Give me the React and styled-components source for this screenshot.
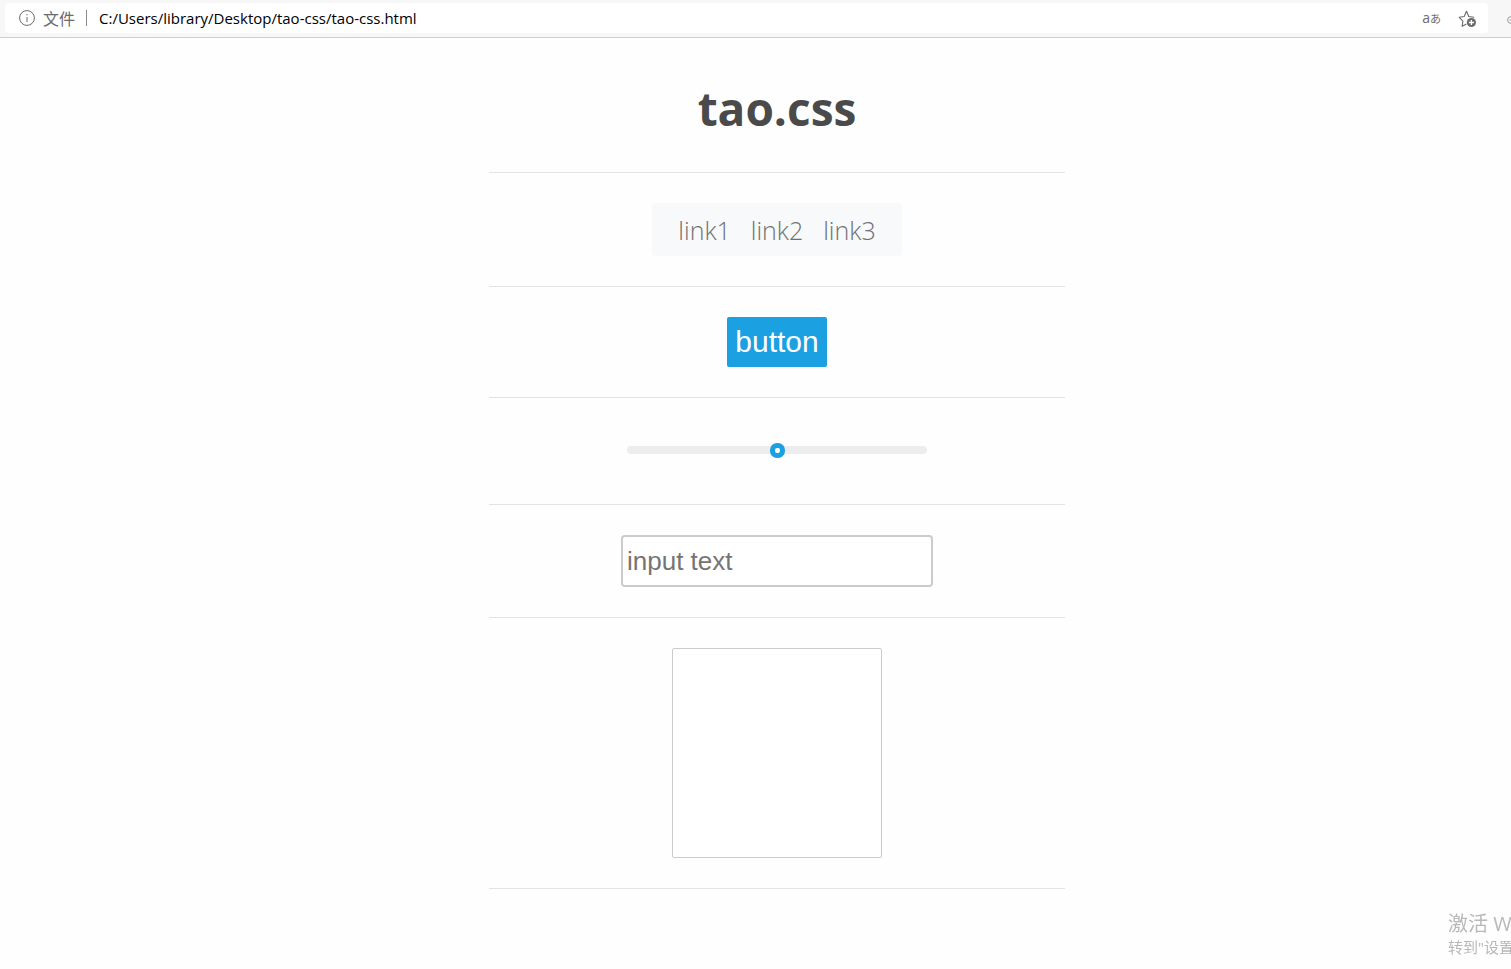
import React from "react";
import styled, { createGlobalStyle } from "styled-components";

const GlobalStyle = createGlobalStyle`
  *, *::before, *::after { box-sizing: border-box; }
  body {
    margin: 0;
    background: #fefefe;
    color: #4a4a4a;
    font-family: "Open Sans", "Noto Sans CJK SC", sans-serif;
    overflow-x: hidden;
  }
`;

const BrowserBar = styled.header`
  display: flex;
  align-items: center;
  gap: 19px;
  height: 38px;
  padding: 0 0 1px 5px;
  background: #f7f7f7;
  border-bottom: 1px solid #cecece;
  overflow: hidden;
`;

const AddressBox = styled.div`
  flex: 1;
  display: flex;
  align-items: center;
  height: 30px;
  padding: 0 11px 0 14px;
  background: #fff;
  border-radius: 4px;
  color: #6b6b6b;
`;

const Scheme = styled.span`
  margin-left: 8px;
  padding-right: 11px;
  font: 400 16px/16px "Noto Sans CJK SC", sans-serif;
  border-right: 1px solid #8a8a8a;
`;

const Address = styled.span`
  flex: 1;
  padding-left: 12px;
  color: #000;
  font-size: 15px;
  line-height: 20px;
`;

const IconButton = styled.button`
  display: flex;
  padding: 0;
  margin-left: 17px;
  border: 0;
  background: none;
  color: #6b6b6b;
`;

const TranslateButton = styled(IconButton)`
  align-items: baseline;
  font: 400 14px/16px "Open Sans", sans-serif;
`;

const Kana = styled.span`
  font: 400 11px/16px "Noto Sans CJK JP", sans-serif;
`;

const EdgeIcon = styled.span`
  display: flex;
  width: 4px;
  overflow: hidden;

  svg { flex-shrink: 0; }
`;

const Page = styled.main`
  display: flex;
  flex-direction: column;
  align-items: center;
  padding: 38px 0 0 43px;
`;

const Title = styled.h1`
  margin: 0;
  padding-bottom: 2px;
  font-size: 46px;
  font-weight: 700;
  line-height: 64px;
`;

const Divider = styled.hr`
  width: 576px;
  max-width: 100%;
  height: 1px;
  margin: 30px 0;
  border: 0;
  background: #e3e3e3;
`;

const LinkBar = styled.nav`
  display: flex;
  gap: 20px;
  padding: 9px 26px 8px;
  background: #f8f9fb;
  border-radius: 4px;
`;

const NavLink = styled.a`
  color: #707070;
  font-size: 25px;
  font-weight: 300;
  line-height: 36px;
  text-decoration: none;
`;

const PrimaryButton = styled.button`
  height: 50px;
  padding: 0 8px;
  border: 0;
  border-radius: 2px;
  background: #1ba1e2;
  color: #fff;
  font: 30px/50px "Liberation Sans", Arial, sans-serif;
`;

const SliderRow = styled.div`
  display: flex;
  align-items: center;
  height: 46px;
  padding-bottom: 2px;
`;

const Slider = styled.input`
  appearance: none;
  width: 300px;
  height: 8px;
  margin: 0;
  border-radius: 4px;
  background: #ededed;

  &::-webkit-slider-thumb {
    appearance: none;
    width: 15px;
    height: 15px;
    border: 5px solid #1ba1e2;
    border-radius: 7px;
    background: #fff;
  }
`;

const TextInput = styled.input`
  width: 312px;
  height: 52px;
  padding: 0 4px;
  border: 2px solid #cbcbcb;
  border-radius: 4px;
  background: #fff;
  font: 26px "Liberation Sans", Arial, sans-serif;

  &::placeholder { color: #757575; }
`;

const Box = styled.div`
  width: 210px;
  height: 210px;
  border: 1px solid #cbcbcb;
  border-radius: 2px;
  background: #fff;
`;

const Activation = styled.aside`
  position: fixed;
  right: 0;
  bottom: 12px;
  width: 63px;
  overflow: hidden;
  white-space: nowrap;
  color: #b8b8b8;
  font-family: "Open Sans", "Noto Sans CJK SC", sans-serif;
  font-weight: 400;
`;

const ActivationTitle = styled.div`
  font-size: 20px;
  line-height: 26px;
`;

const ActivationText = styled.div`
  font-size: 15px;
  line-height: 20px;
`;

const InfoIcon = () => (
  <svg width="16" height="16" viewBox="0 0 16 16" fill="none" stroke="currentColor" aria-hidden="true">
    <circle cx="8" cy="8" r="7.4" />
    <path d="M8 7v5" />
    <path d="M8 4v1.3" />
  </svg>
);

const FavoriteIcon = () => (
  <svg width="19" height="19" viewBox="0 0 19 19" fill="none" stroke="currentColor" aria-hidden="true">
    <path
      d="M8 15.2l-3.9 2.1.8-5.2L1.2 8.3l5-.8L8.5 2.2l2.3 5.3 5 .8"
      strokeLinejoin="round"
      strokeLinecap="round"
      strokeWidth="1.1"
    />
    <circle cx="13.4" cy="13.5" r="4.6" fill="currentColor" stroke="none" />
    <path d="M13.4 11v5M10.9 13.5h5" stroke="#fff" strokeWidth="1.3" />
  </svg>
);

const LINKS = ["link1", "link2", "link3"];

export default function App() {
  return (
    <>
      <GlobalStyle />
      <BrowserBar>
        <AddressBox>
          <InfoIcon />
          <Scheme lang="zh-CN">文件</Scheme>
          <Address>C:/Users/library/Desktop/tao-css/tao-css.html</Address>
          <TranslateButton type="button" aria-label="Translate">
            a<Kana lang="ja">あ</Kana>
          </TranslateButton>
          <IconButton type="button" aria-label="Add to favorites">
            <FavoriteIcon />
          </IconButton>
        </AddressBox>
        <EdgeIcon>
          <svg width="12" height="12" viewBox="0 0 12 12" fill="none" stroke="#9a9a9a" aria-hidden="true">
            <circle cx="4" cy="8" r="3.4" />
            <path d="M2.5 8h3" />
          </svg>
        </EdgeIcon>
      </BrowserBar>
      <Page>
        <Title>tao.css</Title>
        <Divider />
        <LinkBar>
          {LINKS.map((name) => (
            <NavLink key={name} href={`#${name}`}>
              {name}
            </NavLink>
          ))}
        </LinkBar>
        <Divider />
        <PrimaryButton type="button">button</PrimaryButton>
        <Divider />
        <SliderRow>
          <Slider type="range" min="0" max="100" defaultValue="50" aria-label="Value" />
        </SliderRow>
        <Divider />
        <TextInput type="text" placeholder="input text" aria-label="Input text" />
        <Divider />
        <Box />
        <Divider />
      </Page>
      <Activation lang="zh-CN">
        <ActivationTitle>激活 Windows</ActivationTitle>
        <ActivationText>转到"设置"以激活 Windows。</ActivationText>
      </Activation>
    </>
  );
}
